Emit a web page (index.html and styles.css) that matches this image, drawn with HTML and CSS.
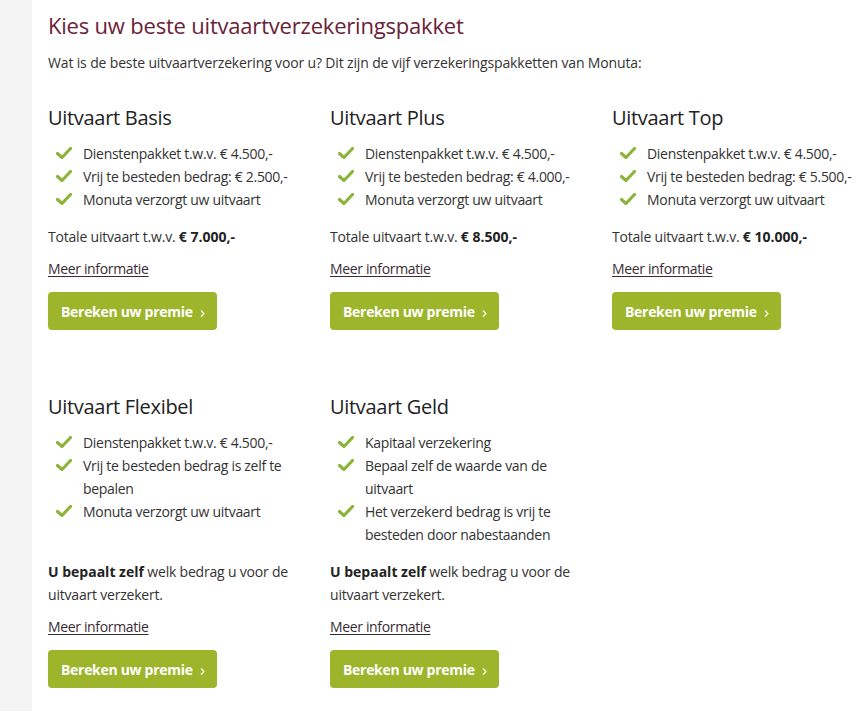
FILE: index.html
```html
<!DOCTYPE html>
<html lang="nl">
<head>
<meta charset="utf-8">
<title>Uitvaartverzekeringspakketten</title>
<link rel="stylesheet" href="styles.css">
</head>
<body>
<div class="page">
  <aside class="side"></aside>
  <main class="main">
    <h1 class="title">Kies uw beste uitvaartverzekeringspakket</h1>
    <p class="intro">Wat is de beste uitvaartverzekering voor u? Dit zijn de vijf verzekeringspakketten van Monuta:</p>
    <div class="grid">
      <section class="card">
        <h2 class="card-title">Uitvaart Basis</h2>
        <ul class="list">
          <li><svg class="check" viewBox="0 0 16 12"><path d="M1.5 6.5 L6 10.5 L14.5 1.5" /></svg><span>Dienstenpakket t.w.v. € 4.500,-</span></li>
          <li><svg class="check" viewBox="0 0 16 12"><path d="M1.5 6.5 L6 10.5 L14.5 1.5" /></svg><span>Vrij te besteden bedrag: € 2.500,-</span></li>
          <li><svg class="check" viewBox="0 0 16 12"><path d="M1.5 6.5 L6 10.5 L14.5 1.5" /></svg><span>Monuta verzorgt uw uitvaart</span></li>
        </ul>
        <p class="text">Totale uitvaart t.w.v. <b>€ 7.000,-</b></p>
        <a class="more" href="#">Meer informatie</a>
        <a class="btn" href="#">Bereken uw premie <span class="chev">›</span></a>
      </section>
      <section class="card">
        <h2 class="card-title">Uitvaart Plus</h2>
        <ul class="list">
          <li><svg class="check" viewBox="0 0 16 12"><path d="M1.5 6.5 L6 10.5 L14.5 1.5" /></svg><span>Dienstenpakket t.w.v. € 4.500,-</span></li>
          <li><svg class="check" viewBox="0 0 16 12"><path d="M1.5 6.5 L6 10.5 L14.5 1.5" /></svg><span>Vrij te besteden bedrag: € 4.000,-</span></li>
          <li><svg class="check" viewBox="0 0 16 12"><path d="M1.5 6.5 L6 10.5 L14.5 1.5" /></svg><span>Monuta verzorgt uw uitvaart</span></li>
        </ul>
        <p class="text">Totale uitvaart t.w.v. <b>€ 8.500,-</b></p>
        <a class="more" href="#">Meer informatie</a>
        <a class="btn" href="#">Bereken uw premie <span class="chev">›</span></a>
      </section>
      <section class="card">
        <h2 class="card-title">Uitvaart Top</h2>
        <ul class="list">
          <li><svg class="check" viewBox="0 0 16 12"><path d="M1.5 6.5 L6 10.5 L14.5 1.5" /></svg><span>Dienstenpakket t.w.v. € 4.500,-</span></li>
          <li><svg class="check" viewBox="0 0 16 12"><path d="M1.5 6.5 L6 10.5 L14.5 1.5" /></svg><span>Vrij te besteden bedrag: € 5.500,-</span></li>
          <li><svg class="check" viewBox="0 0 16 12"><path d="M1.5 6.5 L6 10.5 L14.5 1.5" /></svg><span>Monuta verzorgt uw uitvaart</span></li>
        </ul>
        <p class="text">Totale uitvaart t.w.v. <b>€ 10.000,-</b></p>
        <a class="more" href="#">Meer informatie</a>
        <a class="btn" href="#">Bereken uw premie <span class="chev">›</span></a>
      </section>
      <section class="card">
        <h2 class="card-title">Uitvaart Flexibel</h2>
        <ul class="list">
          <li><svg class="check" viewBox="0 0 16 12"><path d="M1.5 6.5 L6 10.5 L14.5 1.5" /></svg><span>Dienstenpakket t.w.v. € 4.500,-</span></li>
          <li><svg class="check" viewBox="0 0 16 12"><path d="M1.5 6.5 L6 10.5 L14.5 1.5" /></svg><span>Vrij te besteden bedrag is zelf te bepalen</span></li>
          <li><svg class="check" viewBox="0 0 16 12"><path d="M1.5 6.5 L6 10.5 L14.5 1.5" /></svg><span>Monuta verzorgt uw uitvaart</span></li>
        </ul>
        <p class="text"><b>U bepaalt zelf</b> welk bedrag u voor de uitvaart verzekert.</p>
        <a class="more" href="#">Meer informatie</a>
        <a class="btn" href="#">Bereken uw premie <span class="chev">›</span></a>
      </section>
      <section class="card">
        <h2 class="card-title">Uitvaart Geld</h2>
        <ul class="list">
          <li><svg class="check" viewBox="0 0 16 12"><path d="M1.5 6.5 L6 10.5 L14.5 1.5" /></svg><span>Kapitaal verzekering</span></li>
          <li><svg class="check" viewBox="0 0 16 12"><path d="M1.5 6.5 L6 10.5 L14.5 1.5" /></svg><span>Bepaal zelf de waarde van de uitvaart</span></li>
          <li><svg class="check" viewBox="0 0 16 12"><path d="M1.5 6.5 L6 10.5 L14.5 1.5" /></svg><span>Het verzekerd bedrag is vrij te besteden door nabestaanden</span></li>
        </ul>
        <p class="text"><b>U bepaalt zelf</b> welk bedrag u voor de uitvaart verzekert.</p>
        <a class="more" href="#">Meer informatie</a>
        <a class="btn" href="#">Bereken uw premie <span class="chev">›</span></a>
      </section>
    </div>
  </main>
</div>
</body>
</html>
```

FILE: styles.css
```css
* { box-sizing: border-box; }
html, body { margin: 0; padding: 0; background: #ffffff; }
body {
  font-family: "Open Sans", "Noto Sans", "Liberation Sans", sans-serif;
  color: #333333;
  font-size: 14px;
}
.page {
  display: flex;
  min-height: 711px;
}
.side {
  width: 32px;
  flex: 0 0 32px;
  background: #f4f4f4;
}
.main {
  flex: 1;
  padding: 10px 0 0 16px;
}
.title {
  margin: 0;
  font-size: 22px;
  line-height: 30px;
  font-weight: 400;
  color: #6a2238;
  letter-spacing: -0.2px;
}
.intro {
  margin: 12px 0 0;
  font-size: 14px;
  line-height: 22px;
  letter-spacing: -0.15px;
}
.grid {
  margin-top: 31px;
  display: grid;
  grid-template-columns: 282px 282px 282px;
  row-gap: 64px;
}
.card {
  display: flex;
  flex-direction: column;
  align-items: flex-start;
}
.card-title {
  margin: 0;
  font-size: 20px;
  line-height: 26px;
  font-weight: 400;
  color: #222222;
  letter-spacing: -0.3px;
}
.list {
  list-style: none;
  margin: 11px 0 14px;
  padding: 0;
  flex: 1;
}
.list li {
  display: flex;
  align-items: flex-start;
  font-size: 14px;
  line-height: 23px;
  letter-spacing: -0.3px;
  width: 245px;
}
.check {
  flex: 0 0 16px;
  width: 16px;
  height: 12px;
  margin: 5px 11px 0 8px;
}
.check path {
  fill: none;
  stroke: #8db43a;
  stroke-width: 3.2;
  stroke-linecap: round;
  stroke-linejoin: round;
}
.text {
  margin: 0;
  font-size: 14px;
  line-height: 23px;
  letter-spacing: -0.2px;
  width: 245px;
}
.text b { font-weight: 700; color: #222; letter-spacing: 0; }
.more {
  margin-top: 9px;
  color: #3b2b35;
  font-size: 14px;
  line-height: 23px;
  letter-spacing: -0.35px;
  text-decoration: underline;
  text-underline-offset: 2px;
}
.btn {
  margin-top: 12px;
  display: inline-flex;
  align-items: center;
  height: 38px;
  width: 169px;
  padding: 0 13px;
  background: #9cb52b;
  color: #ffffff;
  border-radius: 4px;
  font-size: 14px;
  font-weight: 700;
  letter-spacing: -0.3px;
  text-decoration: none;
  white-space: pre;
}
.chev {
  font-weight: 400;
  font-size: 17px;
  margin-left: 4px;
  line-height: 1;
}
```
